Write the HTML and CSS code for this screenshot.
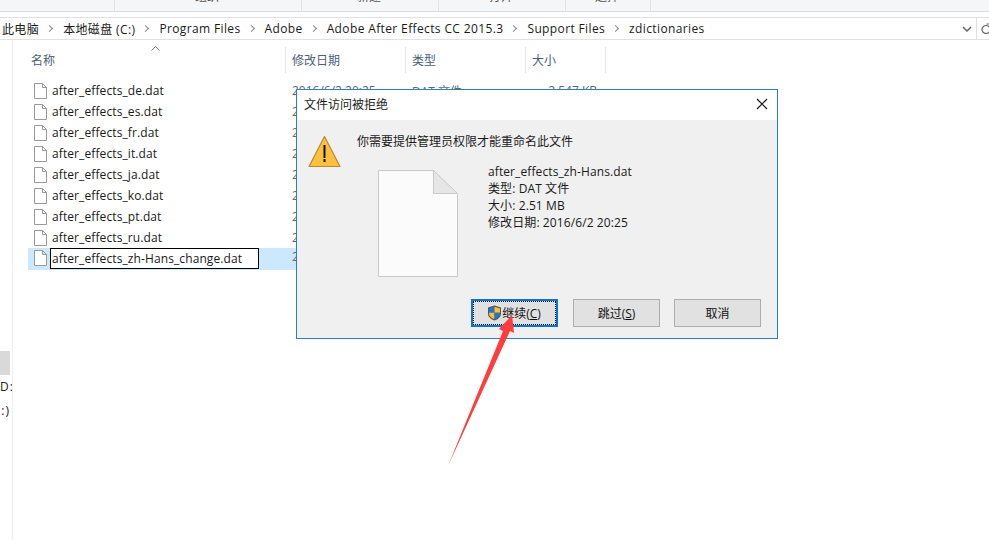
FILE: index.html
```html
<!DOCTYPE html>
<html lang="zh-CN">
<head>
    <meta charset="UTF-8">
    <meta name="viewport" content="width=device-width, initial-scale=1.0">
    <title>zdictionaries</title>
    <link rel="stylesheet" href="styles.css">
</head>
<body>
    <div class="ribbon">
        <div class="ribbon-group group-first"></div>
        <div class="ribbon-group group-org"><span>组织</span></div>
        <div class="ribbon-group group-new"><span>新建</span></div>
        <div class="ribbon-group group-open"><span>打开</span></div>
        <div class="ribbon-group group-select"><span>选择</span></div>
    </div>

    <div class="address">
        <div class="crumbs">
            <span>此电脑</span><i class="sep"></i>
            <span>本地磁盘 (C:)</span><i class="sep"></i>
            <span>Program Files</span><i class="sep"></i>
            <span>Adobe</span><i class="sep"></i>
            <span>Adobe After Effects CC 2015.3</span><i class="sep"></i>
            <span>Support Files</span><i class="sep"></i>
            <span>zdictionaries</span>
        </div>
        <div class="address-tools">
            <svg width="10" height="6" viewBox="0 0 10 6"><path d="M1 1l4 4 4-4" fill="none" stroke="#666" stroke-width="1.5"/></svg>
            <i class="tool-line"></i>
            <svg class="refresh" width="10" height="12" viewBox="0 0 10 12"><path d="M8.500 4.500A4 4 0 1 0 9 7M5.500 1h3.500v3" fill="none" stroke="#666" stroke-width="1.2"/></svg>
        </div>
    </div>

    <div class="main">
        <div class="nav">
            <div class="nav-selected"></div>
            <div class="nav-item">D:</div>
            <div class="nav-item">:)</div>
        </div>
        <div class="list">
            <div class="list-head">
                <div class="col col-name">名称<svg class="sort" width="9" height="5" viewBox="0 0 9 5"><path d="M.5 4.500l4-4 4 4" fill="none" stroke="#777"/></svg></div>
                <div class="col col-date">修改日期</div>
                <div class="col col-type">类型</div>
                <div class="col col-size">大小</div>
            </div>
            <div class="rows">
                <div class="row">
                    <svg class="file" width="13" height="16" viewBox="0 0 13 16"><path d="M.5.5h8l4 4v11H.5zM8.500.5v4h4" fill="#fff" stroke="#999"/></svg>
                    <span class="name">after_effects_de.dat</span><span class="date">2016/6/2 20:25</span><span class="type">DAT 文件</span><span class="size">2,547 KB</span>
                </div>
                <div class="row">
                    <svg class="file" width="13" height="16" viewBox="0 0 13 16"><path d="M.5.5h8l4 4v11H.5zM8.500.5v4h4" fill="#fff" stroke="#999"/></svg>
                    <span class="name">after_effects_es.dat</span><span class="date">2016/6/2 20:25</span><span class="type">DAT 文件</span><span class="size">2,547 KB</span>
                </div>
                <div class="row">
                    <svg class="file" width="13" height="16" viewBox="0 0 13 16"><path d="M.5.5h8l4 4v11H.5zM8.500.5v4h4" fill="#fff" stroke="#999"/></svg>
                    <span class="name">after_effects_fr.dat</span><span class="date">2016/6/2 20:25</span><span class="type">DAT 文件</span><span class="size">2,547 KB</span>
                </div>
                <div class="row">
                    <svg class="file" width="13" height="16" viewBox="0 0 13 16"><path d="M.5.5h8l4 4v11H.5zM8.500.5v4h4" fill="#fff" stroke="#999"/></svg>
                    <span class="name">after_effects_it.dat</span><span class="date">2016/6/2 20:25</span><span class="type">DAT 文件</span><span class="size">2,547 KB</span>
                </div>
                <div class="row">
                    <svg class="file" width="13" height="16" viewBox="0 0 13 16"><path d="M.5.5h8l4 4v11H.5zM8.500.5v4h4" fill="#fff" stroke="#999"/></svg>
                    <span class="name">after_effects_ja.dat</span><span class="date">2016/6/2 20:25</span><span class="type">DAT 文件</span><span class="size">2,547 KB</span>
                </div>
                <div class="row">
                    <svg class="file" width="13" height="16" viewBox="0 0 13 16"><path d="M.5.5h8l4 4v11H.5zM8.500.5v4h4" fill="#fff" stroke="#999"/></svg>
                    <span class="name">after_effects_ko.dat</span><span class="date">2016/6/2 20:25</span><span class="type">DAT 文件</span><span class="size">2,547 KB</span>
                </div>
                <div class="row">
                    <svg class="file" width="13" height="16" viewBox="0 0 13 16"><path d="M.5.5h8l4 4v11H.5zM8.500.5v4h4" fill="#fff" stroke="#999"/></svg>
                    <span class="name">after_effects_pt.dat</span><span class="date">2016/6/2 20:25</span><span class="type">DAT 文件</span><span class="size">2,547 KB</span>
                </div>
                <div class="row">
                    <svg class="file" width="13" height="16" viewBox="0 0 13 16"><path d="M.5.5h8l4 4v11H.5zM8.500.5v4h4" fill="#fff" stroke="#999"/></svg>
                    <span class="name">after_effects_ru.dat</span><span class="date">2016/6/2 20:25</span><span class="type">DAT 文件</span><span class="size">2,547 KB</span>
                </div>
                <div class="row row-selected">
                    <svg class="file" width="13" height="16" viewBox="0 0 13 16"><path d="M.5.5h8l4 4v11H.5zM8.500.5v4h4" fill="#fff" stroke="#999"/></svg>
                    <span class="rename">after_effects_zh-Hans_change.dat</span><span class="date">2016/6/2 20:25</span><span class="type">DAT 文件</span><span class="size">2,571 KB</span>
                </div>
            </div>
        </div>
    </div>

    <div class="dialog">
        <div class="dialog-title">
            <span>文件访问被拒绝</span>
            <svg width="12" height="12" viewBox="0 0 12 12"><path d="M1 1l10 10M11 1L1 11" fill="none" stroke="#111" stroke-width="1.1"/></svg>
        </div>
        <div class="dialog-body">
            <div class="message">
                <svg class="warn" width="33" height="33" viewBox="0 0 33 33"><path d="M16.500 1.500L32 31.500H1z" fill="#fdbf3e" stroke="#b98a2c" stroke-width="1.2" stroke-linejoin="round"/><rect x="15.500" y="10" width="2" height="13" fill="#111"/><rect x="15.500" y="24" width="2" height="3" fill="#111"/></svg>
                <span class="message-text">你需要提供管理员权限才能重命名此文件</span>
            </div>
            <div class="file-info">
                <svg class="big-file" width="80" height="107" viewBox="0 0 80 107"><path d="M.5.5h55l24 24v82H.5z" fill="#fbfbfc" stroke="#c9c9c9"/><path d="M55.500.5v23h24z" fill="#e6e6e6" stroke="#c9c9c9"/></svg>
                <div class="details">
                    <div>after_effects_zh-Hans.dat</div>
                    <div>类型: DAT 文件</div>
                    <div>大小: 2.51 MB</div>
                    <div>修改日期: 2016/6/2 20:25</div>
                </div>
            </div>
            <div class="buttons">
                <button class="btn btn-focus"><span class="btn-inner">
                    <svg width="15" height="16" viewBox="0 0 15 16"><path d="M7.500.5l6.500 2v6c0 3.500-3 5.800-6.500 7C4 14.300 1 12 1 8.500v-6z" fill="#555"/><path d="M7.500 1.800L2 3.400v4.300h5.500z" fill="#1c78d2"/><path d="M7.500 1.800L13 3.400v4.300H7.500z" fill="#fbc02d"/><path d="M2 7.700h5.500v6.600C4.500 13.200 2 11.400 2 8.500z" fill="#fbc02d"/><path d="M13 7.700H7.500v6.600c3-1.100 5.500-2.900 5.500-5.800z" fill="#1c78d2"/></svg>
                    继续(<u>C</u>)</span></button>
                <button class="btn">跳过(<u>S</u>)</button>
                <button class="btn">取消</button>
            </div>
        </div>
    </div>

    <svg class="arrow" width="80" height="160" viewBox="0 0 80 160"><polygon points="1,153 56,18 52,16 65,2 67,20 63,18" fill="#ff3d3d"/></svg>
</body>
</html>
```

FILE: styles.css
```css
html, body {
    margin: 0;
    height: 100%;
}
body {
    position: relative;
    width: 989px;
    height: 540px;
    overflow: hidden;
    background: #fff;
    color: #1a1a1a;
    font-family: "Open Sans", "Noto Sans CJK SC", sans-serif;
    font-size: 12px;
}

/* ribbon, only the bottom edge is on screen */
.ribbon {
    display: flex;
    height: 11px;
    overflow: hidden;
    background: #f5f6f7;
    border-bottom: 1px solid #dadbdc;
    color: #555;
}
.ribbon-group {
    box-sizing: border-box;
    height: 12px;
    padding-right: 2px;
    border-right: 1px solid #e2e3e4;
    text-align: center;
    line-height: 16px;
}
.ribbon-group span {
    display: block;
    margin-top: -11px;
}
.group-first { width: 115px; }
.group-org { width: 187px; }
.group-new { width: 137px; }
.group-open { width: 127px; }
.group-select { width: 85px; }

.address {
    display: flex;
    justify-content: space-between;
    align-items: center;
    height: 21px;
    margin-top: 5px;
    border-top: 1px solid #e1e1e1;
    border-bottom: 1px solid #e1e1e1;
    padding-left: 2px;
    letter-spacing: .37px;
}
.crumbs {
    display: flex;
    align-items: center;
}
.sep {
    width: 5px;
    height: 5px;
    margin: 0 11px 0 8px;
    border-top: 1.5px solid #888;
    border-right: 1.5px solid #888;
    box-sizing: border-box;
    transform: rotate(45deg);
}
.address-tools {
    display: flex;
    align-items: center;
    gap: 4px;
    height: 21px;
}
.tool-line {
    width: 1px;
    height: 21px;
    background: #e1e1e1;
}
.refresh {
    margin-right: -2px;
}

.main {
    display: flex;
    height: 500px;
}
.nav {
    box-sizing: border-box;
    width: 13px;
    padding-top: 311px;
    border-right: 1px solid #f0f0f0;
    overflow: hidden;
}
.nav-selected {
    width: 10px;
    height: 24px;
    background: #d9d9d9;
}
.nav-item {
    width: 10px;
    height: 24px;
    line-height: 24px;
    letter-spacing: 1px;
    text-align: right;
    white-space: nowrap;
    color: #222;
}
.list {
    flex: 1;
    padding-left: 15px;
}
.list-head {
    display: flex;
    height: 26px;
    margin-top: 7px;
    color: #4c607a;
    line-height: 28px;
}
.col {
    box-sizing: border-box;
    position: relative;
    border-right: 1px solid #e5e5e5;
    padding-left: 6px;
}
.col-name {
    width: 258px;
    padding-left: 3px;
}
.col-date, .col-type {
    width: 120px;
}
.col-size {
    width: 80px;
}
.sort {
    position: absolute;
    left: 123px;
    top: -1px;
}
.rows {
    padding-top: 7px;
}
.row {
    display: flex;
    align-items: center;
    width: 577px;
    height: 21px;
    white-space: nowrap;
}
.file {
    flex: none;
    margin-left: 6px;
    margin-right: 5px;
}
.name {
    width: 240px;
    letter-spacing: .1px;
}
.date {
    width: 120px;
    color: #666;
}
.type {
    width: 85px;
    color: #666;
}
.size {
    width: 100px;
    text-align: right;
    color: #666;
}
.row-selected {
    align-items: flex-start;
    height: 22px;
    background: #cce8ff;
}
.row-selected .file {
    margin-top: 2px;
}
.rename {
    box-sizing: border-box;
    width: 209px;
    height: 21px;
    margin-left: -2px;
    margin-right: 33px;
    padding-left: 1px;
    border: 1px solid #000;
    background: #fff;
    line-height: 19px;
    letter-spacing: .1px;
}

/* dialog sits over the list */
.dialog {
    position: absolute;
    left: 296px;
    top: 89px;
    box-sizing: border-box;
    width: 482px;
    height: 250px;
    border: 1px solid #2a7fc9;
    background: #f0f0f0;
}
.dialog-title {
    display: flex;
    justify-content: space-between;
    align-items: center;
    box-sizing: border-box;
    height: 30px;
    padding: 0 9px 2px 7px;
    background: #fff;
}
.dialog-body {
    display: flex;
    flex-direction: column;
    height: 218px;
    padding: 0 16px 11px 11px;
    box-sizing: border-box;
}
.message {
    display: flex;
    align-items: flex-start;
    gap: 16px;
    height: 43px;
}
.warn {
    margin-top: 15px;
}
.message-text {
    margin-top: 13px;
    line-height: 17px;
}
.file-info {
    display: flex;
    gap: 30px;
    margin-left: 70px;
    margin-top: 7px;
}
.big-file {
    flex: none;
}
.details {
    line-height: 17px;
    margin-top: -7px;
    letter-spacing: .1px;
}
.buttons {
    display: flex;
    justify-content: flex-end;
    gap: 14px;
    margin-top: auto;
}
.btn {
    box-sizing: border-box;
    width: 87px;
    height: 28px;
    padding: 0;
    border: 1px solid #adadad;
    background: #e1e1e1;
    color: #111;
    font: inherit;
}
.btn-focus {
    margin-right: 1px;
    border: 2px solid #0078d7;
}
.btn-inner {
    display: flex;
    align-items: center;
    justify-content: center;
    height: 100%;
    padding-right: 1px;
    box-sizing: border-box;
    border: 1px dotted #000;
}

.arrow {
    position: absolute;
    left: 447px;
    top: 313px;
}
```
